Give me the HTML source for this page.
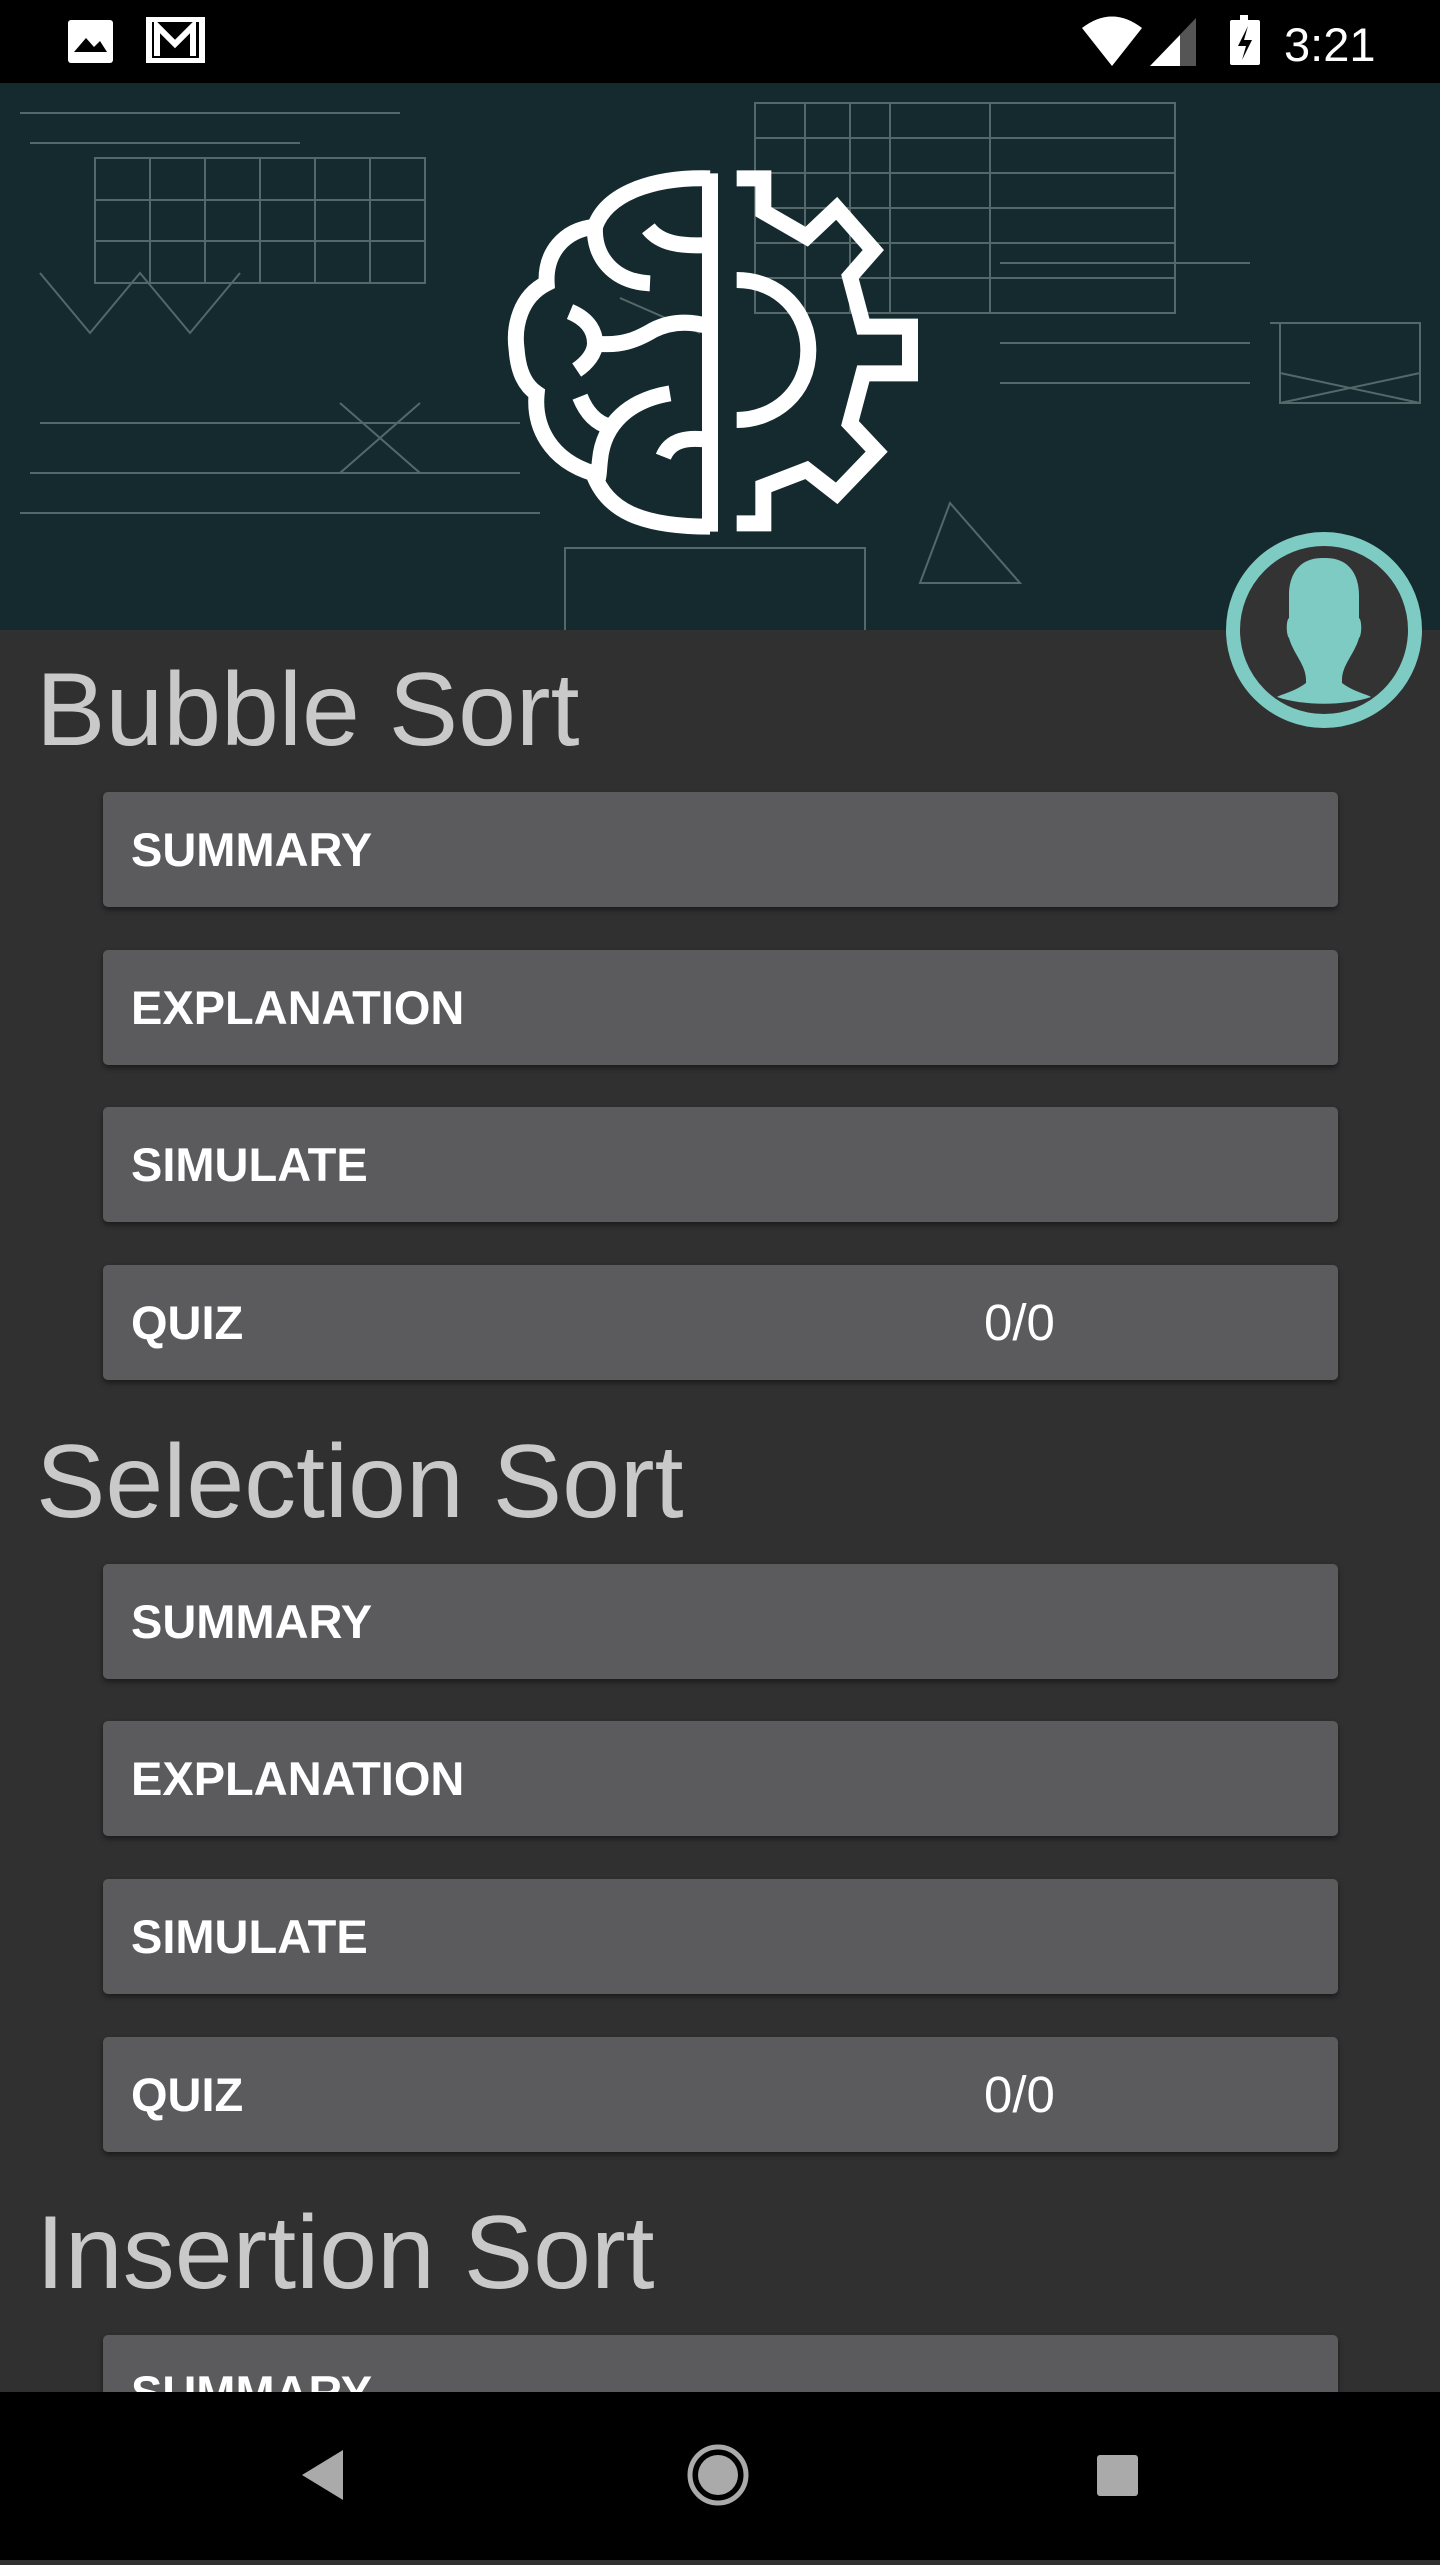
<!DOCTYPE html>
<html><head><meta charset="utf-8"><style>
*{margin:0;padding:0;box-sizing:border-box}
body{width:1440px;height:2560px;background:#303030;position:relative;overflow:hidden;font-family:"Liberation Sans",Roboto,sans-serif}
.sb{position:absolute;left:0;top:0;width:1440px;height:83px;background:#000}
.hdr{position:absolute;left:0;top:83px;width:1440px;height:547px;background:#142a2e;overflow:hidden}
.t{position:absolute;left:36px;color:#c9c9c9;font-size:104px;line-height:1}
.b{position:absolute;left:103px;width:1235px;height:115px;background:#5b5b5d;border-radius:5px;box-shadow:0 3px 6px rgba(0,0,0,.45);color:#fff;font-weight:bold;font-size:47px;line-height:115px;padding-left:28px}
.b span{position:absolute;left:881px;font-weight:normal;font-size:51px}
.nav{position:absolute;left:0;top:2392px;width:1440px;height:168px;background:#000}
</style></head><body>
<div class="hdr">
<svg width="1440" height="547" style="position:absolute;left:0;top:0" fill="none" stroke="#8a9a9a" stroke-width="2" opacity=".55">
<rect x="95" y="75" width="330" height="125"/><path d="M95,117H425M95,158H425M150,75V200M205,75V200M260,75V200M315,75V200M370,75V200"/>
<rect x="755" y="20" width="420" height="210"/><path d="M755,55H1175M755,90H1175M755,125H1175M755,160H1175M755,195H1175M805,20V230M850,20V230M890,20V230M990,20V230"/>
<path d="M20,30H400M30,60H300M40,340H520M30,390H520M20,430H540M620,215L700,250M1270,240H1420M1280,290L1420,320M1280,320L1420,290"/>
<rect x="565" y="465" width="300" height="85"/><rect x="1280" y="240" width="140" height="80"/>
<path d="M40,190L90,250L140,190L190,250L240,190M340,320L420,390M420,320L340,390M1000,180H1250M1000,260H1250M1000,300H1250M950,420L1020,500L920,500Z"/>
</svg>
<svg width="1440" height="547" style="position:absolute;left:0;top:0">
<g transform="translate(480,57) scale(0.33333)" fill="none" stroke="#fff" stroke-width="48" stroke-linecap="butt" stroke-linejoin="miter">
<path d="M690,100V1175"/>
<path d="M690,115C520,110 380,160 345,260C250,270 195,340 200,430C120,470 100,560 110,630C115,700 140,740 170,760C160,860 210,960 340,1000C380,1110 480,1160 690,1160"/>
<path d="M345,260C340,350 400,425 510,430"/>
<path d="M505,265C540,310 600,320 690,315"/>
<path d="M270,515C330,540 345,580 345,610C345,640 320,670 290,690M345,610C420,620 470,600 520,570C580,540 640,545 690,560"/>
<path d="M300,770C320,820 350,850 390,860"/>
<path d="M570,760C450,780 370,850 360,960C355,1000 358,1030 345,1010"/>
<path d="M550,950C570,900 620,890 690,900"/>
<path d="M770,115L850,115L850,215L980,290L1070,205L1180,330L1110,410L1150,560L1290,560L1290,700L1150,700L1110,850L1190,935L1070,1060L980,990L850,1040L850,1150L770,1150"/>
<path d="M770,420C900,420 985,520 985,630C985,760 880,840 770,840"/>
</g></svg>
</div>
<div class="sb">
<svg width="1440" height="83">
<rect x="68" y="20" width="45" height="43" rx="3" fill="#fff"/><path d="M74,52L86,38L94,47L100,41L107,52Z" fill="#000"/>
<rect x="146" y="17" width="59" height="46" fill="#fff"/><rect x="152" y="22" width="47" height="36" fill="#000"/><path d="M157,56V26L175,44L193,26V56" stroke="#fff" stroke-width="6" fill="none"/>
<path d="M1082,28Q1112,5 1142,28L1112,66Z" fill="#fff"/>
<path d="M1150,66L1196,18V66Z" fill="#555"/><path d="M1150,66L1180,35V66Z" fill="#fff"/>
<rect x="1240" y="15" width="8" height="6" fill="#fff"/><rect x="1230" y="20" width="30" height="45" rx="2" fill="#fff"/><path d="M1248,26L1238,46H1246L1242,60L1252,40H1244Z" fill="#000"/>
<text x="1284" y="61" fill="#fff" font-size="47" font-family="Liberation Sans,sans-serif">3:21</text>
</svg></div>
<svg width="210" height="210" style="position:absolute;left:1219px;top:525px" viewBox="-105 -105 210 210">
<circle r="91" fill="#333" stroke="#7ecbc3" stroke-width="14"/>
<path d="M-2,-72C-25,-72 -35,-55 -35,-35V-12C-38,-10 -38,5 -35,8C-30,25 -18,35 -18,50V53C-30,62 -45,65 -47,67C-20,76 20,76 47,67C45,65 30,62 18,53V50C18,35 30,25 35,8C38,5 38,-10 35,-12V-35C35,-55 25,-72 2,-72Z" fill="#7ecbc3"/>
</svg>
<div class="t" style="top:658px">Bubble Sort</div>
<div class="b" style="top:792px">SUMMARY</div>
<div class="b" style="top:950px">EXPLANATION</div>
<div class="b" style="top:1107px">SIMULATE</div>
<div class="b" style="top:1265px">QUIZ<span>0/0</span></div>
<div class="t" style="top:1430px">Selection Sort</div>
<div class="b" style="top:1564px">SUMMARY</div>
<div class="b" style="top:1721px">EXPLANATION</div>
<div class="b" style="top:1879px">SIMULATE</div>
<div class="b" style="top:2037px">QUIZ<span>0/0</span></div>
<div class="t" style="top:2201px">Insertion Sort</div>
<div class="b" style="top:2335px">SUMMARY</div>
<div class="nav"><svg width="1440" height="168">
<path d="M343,58V108L302,83Z" fill="#aaa"/>
<circle cx="718" cy="83" r="28" fill="none" stroke="#aaa" stroke-width="5"/><circle cx="718" cy="83" r="20" fill="#aaa"/>
<rect x="1097" y="63" width="41" height="41" rx="3" fill="#aaa"/>
</svg></div>
</body></html>
